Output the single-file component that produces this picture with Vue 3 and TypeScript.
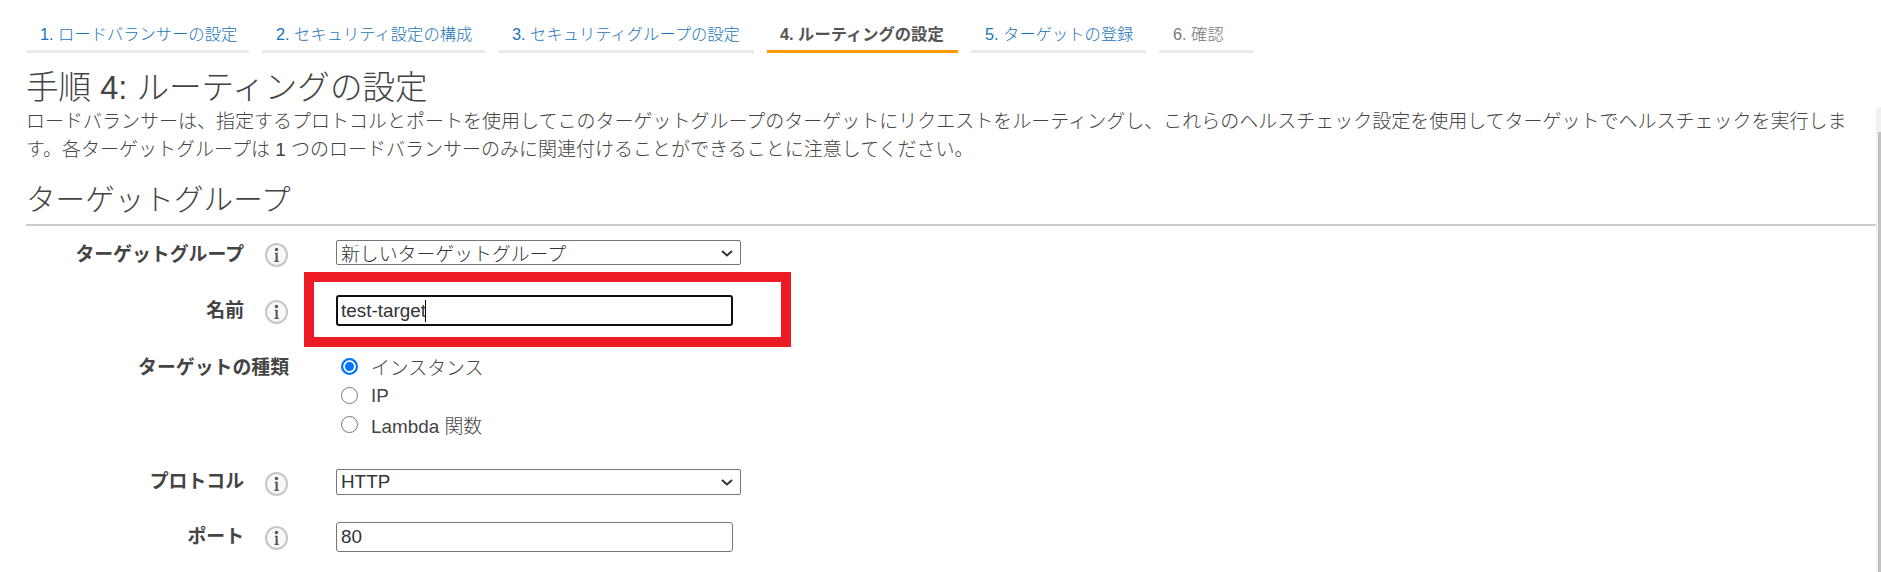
<script setup lang="ts">
const tabs = [
  { label: '1. ロードバランサーの設定', w: 223, state: 'link' },
  { label: '2. セキュリティ設定の構成', w: 223, state: 'link' },
  { label: '3. セキュリティグループの設定', w: 256, state: 'link' },
  { label: '4. ルーティングの設定', w: 191, state: 'active' },
  { label: '5. ターゲットの登録', w: 175, state: 'link' },
  { label: '6. 確認', w: 95, state: 'off' },
]
</script>

<template>
  <div class="page">
    <ul class="tabs">
      <li v-for="t in tabs" :key="t.label" :class="['tab', t.state]" :style="{ width: t.w + 'px' }">{{ t.label }}</li>
    </ul>
    <h1>手順 4: ルーティングの設定</h1>
    <p class="intro">ロードバランサーは、指定するプロトコルとポートを使用してこのターゲットグループのターゲットにリクエストをルーティングし、これらのヘルスチェック設定を使用してターゲットでヘルスチェックを実行します。各ターゲットグループは 1 つのロードバランサーのみに関連付けることができることに注意してください。</p>
    <h2>ターゲットグループ</h2>
    <div class="form">
      <div class="row r1">
        <label>ターゲットグループ</label>
        <svg class="info" viewBox="0 0 23 24"><ellipse cx="11.5" cy="12" rx="10.5" ry="11" fill="#f8f8f8" stroke="#c6c6c6" stroke-width="2" /><circle cx="11.5" cy="6.5" r="1.7" fill="#555" /><path d="M9.8 9.8h2.9v8h1.1v1.2H9.4v-1.2h1.2v-6.8H9.8z" fill="#555" /></svg>
        <div class="sel">新しいターゲットグループ
          <svg viewBox="0 0 12 7" class="caret"><path d="M1 1 6 5.5 11 1" fill="none" stroke="#333" stroke-width="2" /></svg>
        </div>
      </div>
      <div class="row r2">
        <label>名前</label>
        <svg class="info" viewBox="0 0 23 24"><ellipse cx="11.5" cy="12" rx="10.5" ry="11" fill="#f8f8f8" stroke="#c6c6c6" stroke-width="2" /><circle cx="11.5" cy="6.5" r="1.7" fill="#555" /><path d="M9.8 9.8h2.9v8h1.1v1.2H9.4v-1.2h1.2v-6.8H9.8z" fill="#555" /></svg>
        <div class="inp focus">test-target<span class="cursor"></span></div>
      </div>
      <div class="row r3">
        <label class="wide">ターゲットの種類</label>
        <div class="radios">
          <div class="radio"><span class="dot on"></span>インスタンス</div>
          <div class="radio"><span class="dot"></span>IP</div>
          <div class="radio"><span class="dot"></span>Lambda 関数</div>
        </div>
      </div>
      <div class="row r4">
        <label>プロトコル</label>
        <svg class="info" viewBox="0 0 23 24"><ellipse cx="11.5" cy="12" rx="10.5" ry="11" fill="#f8f8f8" stroke="#c6c6c6" stroke-width="2" /><circle cx="11.5" cy="6.5" r="1.7" fill="#555" /><path d="M9.8 9.8h2.9v8h1.1v1.2H9.4v-1.2h1.2v-6.8H9.8z" fill="#555" /></svg>
        <div class="sel">HTTP
          <svg viewBox="0 0 12 7" class="caret"><path d="M1 1 6 5.5 11 1" fill="none" stroke="#333" stroke-width="2" /></svg>
        </div>
      </div>
      <div class="row r5">
        <label>ポート</label>
        <svg class="info" viewBox="0 0 23 24"><ellipse cx="11.5" cy="12" rx="10.5" ry="11" fill="#f8f8f8" stroke="#c6c6c6" stroke-width="2" /><circle cx="11.5" cy="6.5" r="1.7" fill="#555" /><path d="M9.8 9.8h2.9v8h1.1v1.2H9.4v-1.2h1.2v-6.8H9.8z" fill="#555" /></svg>
        <div class="inp">80</div>
      </div>
    </div>
    <div class="highlight"></div>
    <div class="scroll"></div>
  </div>
</template>

<style>
html, body { margin: 0; background: #fff; overflow: hidden; }
</style>

<style scoped>
.page {
  position: relative;
  height: 572px;
  overflow: hidden;
  box-sizing: border-box;
  padding: 0 5px 0 26px;
  color: #444;
  font-family: "Liberation Sans", "Noto Sans CJK JP", sans-serif;
}
.tabs {
  display: flex;
  gap: 13px;
  list-style: none;
  margin: 0;
  padding: 20px 0 0;
}
.tab {
  box-sizing: border-box;
  height: 33px;
  padding: 2px 0 0 14px;
  border-bottom: 3px solid #eaeaea;
  font-size: 16.3px;
  line-height: 24px;
  font-weight: 300;
  white-space: nowrap;
}
.link { color: #1a73ba; }
.off { color: #777; }
.active { border-bottom-color: #f90; color: #555; font-weight: 700; padding-left: 13px; }
h1 {
  margin: 15px 0 0;
  font-size: 32.6px;
  line-height: 40px;
  font-weight: 300;
  color: #444;
}
.intro {
  margin: 0;
  max-width: 1830px;
  font-size: 19px;
  line-height: 28px;
  font-weight: 300;
  color: #444;
}
h2 {
  margin: 14px 0 0;
  height: 46px;
  line-height: 44px;
  font-size: 29.6px;
  font-weight: 300;
  border-bottom: 2px solid #ccc;
}
.form { font-size: 18.88px; }
.row {
  display: grid;
  grid-template-columns: 218px 92px 1fr;
  align-items: center;
}
.row label { grid-column: 1; text-align: right; font-weight: 700; color: #444; white-space: nowrap; }
.row label.wide { grid-column: 1 / 3; width: 263px; }
.info {
  width: 23px;
  height: 24px;
  margin: 5px 0 0 21px;
  filter: blur(0.3px);
}
.r1 { margin-top: 12px; height: 25px; }
.r2 { margin-top: 32px; height: 31px; }
.r2 label { margin-top: -4px; }
.r2 .info { margin-top: 3px; }
.r3 { margin-top: 26px; align-items: start; }
.r4 { margin-top: 28px; height: 26px; }
.r4 label { margin-top: -4px; }
.r5 { margin-top: 29px; height: 30px; }
.r5 label { margin-top: -6px; }
.r5 .info { margin-top: 1px; }
.sel, .inp {
  position: relative;
  box-sizing: border-box;
  color: #333;
  background: #fff;
  border: 1px solid #767676;
  padding: 0 4px;
  display: flex;
  align-items: center;
  font-weight: 300;
  white-space: nowrap;
}
.sel { width: 405px; height: 25px; border-radius: 2px; }
.r4 .sel { height: 26px; }
.inp { width: 397px; height: 30px; border-radius: 3px; }
.inp.focus { height: 31px; border: 2px solid #101010; padding: 0 3px; }
.cursor { display: inline-block; width: 1px; height: 22px; background: #000; margin-left: -1px; }
.caret { position: absolute; right: 7px; top: 9px; width: 12px; height: 7px; }
.radios { grid-column: 3; }
.radio { display: flex; align-items: center; height: 29px; font-weight: 300; color: #444; }
.dot {
  box-sizing: border-box;
  width: 17px;
  height: 17px;
  margin: 0 13px 0 5px;
  border-radius: 50%;
  border: 1px solid #767676;
  background: #fff;
}
.dot.on { border: 2px solid #0075ff; box-shadow: inset 0 0 0 2px #fff; background: #0075ff; }
.highlight {
  position: absolute;
  left: 304px;
  top: 272px;
  width: 487px;
  height: 75px;
  box-sizing: border-box;
  border: 10px solid #ed1c24;
  pointer-events: none;
}
.scroll {
  position: absolute;
  right: 0;
  top: 107px;
  bottom: 0;
  width: 5px;
  background: #f1f1f1;
}
.scroll::after {
  content: "";
  position: absolute;
  right: 0;
  top: 25px;
  bottom: 0;
  width: 3px;
  background: #c1c1c1;
}
</style>
